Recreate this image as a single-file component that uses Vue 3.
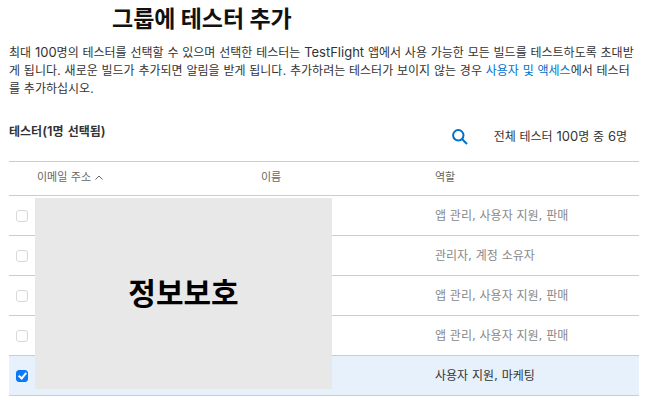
<script setup>
import { ref, computed } from 'vue'

const rows = ref([
  { id: 1, role: '앱 관리, 사용자 지원, 판매', selected: false, disabled: true },
  { id: 2, role: '관리자, 계정 소유자', selected: false, disabled: true },
  { id: 3, role: '앱 관리, 사용자 지원, 판매', selected: false, disabled: true },
  { id: 4, role: '앱 관리, 사용자 지원, 판매', selected: false, disabled: true },
  { id: 5, role: '사용자 지원, 마케팅', selected: true, disabled: false }
])

const selectedCount = computed(() => rows.value.filter((row) => row.selected).length)
</script>

<template>
  <main class="dialog">
    <h1 class="title">그룹에 테스터 추가</h1>
    <p class="intro">
      최대 <span class="latin">100</span>명의 테스터를 선택할 수 있으며 선택한 테스터는 <span class="latin">TestFlight</span> 앱에서 사용 가능한 모든 빌드를 테스트하도록 초대받<br />게 됩니다. 새로운 빌드가 추가되면 알림을 받게 됩니다. 추가하려는 테스터가 보이지 않는 경우 <a class="link" href="#users">사용자 및 액세스</a>에서 테스터<br />를 추가하십시오.
    </p>

    <div class="toolbar">
      <h2 class="subtitle">테스터<span class="latin">({{ selectedCount }}</span>명 선택됨<span class="latin">)</span></h2>
      <div class="tools">
        <button class="search" type="button" aria-label="검색">
          <svg viewBox="0 0 16 16" width="16" height="16" aria-hidden="true">
            <circle cx="6.3" cy="6.3" r="5.2" />
            <path d="M10.2 10.2 L15 15" />
          </svg>
        </button>
        <span class="count">전체 테스터 <span class="latin">100</span>명 중 <span class="latin">6</span>명</span>
      </div>
    </div>

    <div class="table-area">
      <table class="testers">
        <thead>
          <tr>
            <th class="col-check"></th>
            <th class="col-email" scope="col">
              <button class="sort" type="button">
                이메일 주소
                <svg viewBox="0 0 8 5" width="8" height="5" aria-hidden="true">
                  <path d="M0.5 4.5 L4 1 L7.5 4.5" />
                </svg>
              </button>
            </th>
            <th class="col-name" scope="col">이름</th>
            <th scope="col">역할</th>
          </tr>
        </thead>
        <tbody>
          <tr v-for="row in rows" :key="row.id" :class="{ selected: row.selected }">
            <td class="check-cell">
              <input
                v-model="row.selected"
                class="check"
                type="checkbox"
                :disabled="row.disabled"
                aria-label="테스터 선택"
              />
            </td>
            <td></td>
            <td></td>
            <td>{{ row.role }}</td>
          </tr>
        </tbody>
      </table>
      <div class="privacy-cover">정보보호</div>
    </div>
  </main>
</template>

<style>
body {
  margin: 0;
  background: #fff;
}
</style>

<style scoped>
.dialog {
  padding: 3px 14px 8px 9px;
  font-family: "DejaVu Sans", "Noto Sans CJK KR", sans-serif;
  font-size: 12px;
  line-height: 18px;
  color: #333;
}

.latin {
  font-family: Inter, sans-serif;
  font-size: 13px;
  line-height: 1;
}

.title {
  margin: 0 0 13px;
  padding-left: 103px;
  font-family: "Noto Sans CJK KR", sans-serif;
  font-size: 23px;
  line-height: 28px;
  font-weight: 700;
  color: #111;
}

.intro {
  margin: 0;
}

.link {
  color: #0070c9;
  text-decoration: none;
}

.toolbar {
  display: flex;
  justify-content: space-between;
  padding: 25px 12px 15px 0;
}

.subtitle {
  margin: 0;
  font-size: 12px;
  line-height: 18px;
  font-weight: 600;
}

.tools {
  display: flex;
  align-items: center;
  gap: 26px;
  padding-top: 5px;
}

.search {
  display: flex;
  padding: 0;
  border: 0;
  background: none;
  cursor: pointer;
}

.search svg {
  fill: none;
  stroke: #0070c9;
  stroke-width: 2;
}

.table-area {
  position: relative;
}

.testers {
  width: 100%;
  table-layout: fixed;
  border-collapse: separate;
  border-spacing: 0;
  border-top: 1px solid #ccc;
}

.testers th,
.testers td {
  box-sizing: border-box;
  padding: 0;
  border-bottom: 1px solid #ccc;
  text-align: left;
}

.testers th {
  height: 34px;
  padding-bottom: 2px;
  font-size: 11px;
  font-weight: 400;
  color: #666;
}

.testers td {
  height: 40px;
  color: #888;
}

.testers .selected td {
  background: #e6f1fb;
  color: #333;
}

.testers .col-check {
  width: 28px;
}

.testers .col-email {
  width: 224px;
}

.testers .col-name {
  width: 174px;
}

.sort {
  display: flex;
  align-items: center;
  gap: 4px;
  padding: 0;
  border: 0;
  background: none;
  font: inherit;
  color: inherit;
  cursor: pointer;
}

.sort svg {
  fill: none;
  stroke: #666;
  stroke-width: 1;
}

.testers .check-cell {
  padding-left: 7px;
}

.check {
  display: block;
  position: relative;
  box-sizing: border-box;
  width: 12px;
  height: 12px;
  margin: 0;
  appearance: none;
  border: 1px solid #d8d8d8;
  border-radius: 3px;
  background: #fff;
}

.check:checked {
  border-color: #0a73f7;
  background: #0a7aff;
}

.check:checked::after {
  content: "";
  position: absolute;
  left: 3px;
  top: 0;
  width: 3px;
  height: 6px;
  border: solid #fff;
  border-width: 0 2px 2px 0;
  transform: rotate(40deg);
}

.privacy-cover {
  position: absolute;
  left: 26px;
  top: 37px;
  bottom: 7px;
  width: 297px;
  box-sizing: border-box;
  padding-bottom: 5px;
  display: flex;
  align-items: center;
  justify-content: center;
  background: #e8e8e8;
  color: #000;
  font-family: "Noto Sans CJK KR", sans-serif;
  font-size: 30px;
  font-weight: 700;
}
</style>
